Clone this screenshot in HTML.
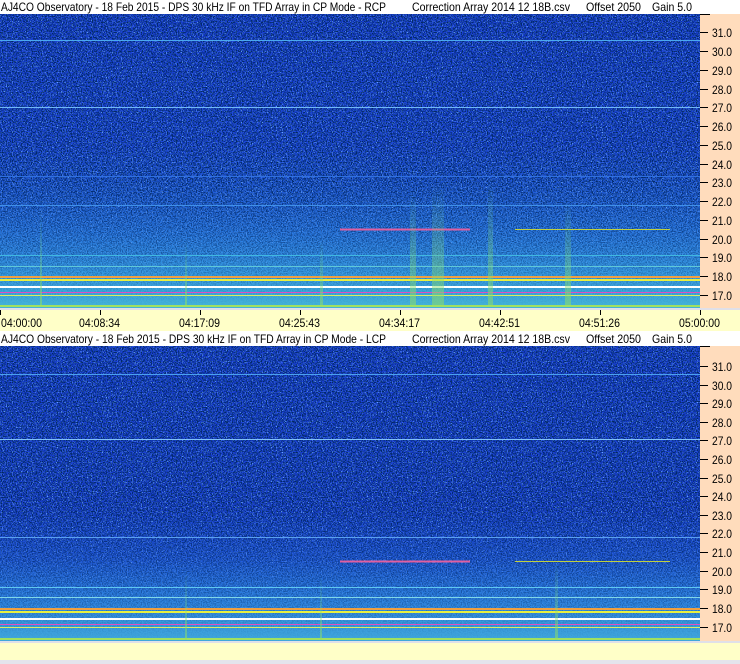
<!DOCTYPE html>
<html><head><style>
html,body{margin:0;padding:0;background:#fff;}
body{width:740px;height:664px;position:relative;overflow:hidden;font-family:"Liberation Sans",sans-serif;}
</style></head><body>
<svg width="740" height="664" style="position:absolute;left:0;top:0">
<defs>
<linearGradient id="g" x1="0" y1="0" x2="0" y2="1">
<stop offset="0" stop-color="#1a40d8"/>
<stop offset="0.45" stop-color="#1c46dc"/>
<stop offset="0.62" stop-color="#2260dc"/>
<stop offset="0.75" stop-color="#2a7ae2"/>
<stop offset="0.87" stop-color="#3598e2"/>
<stop offset="1" stop-color="#44b4d8"/>
</linearGradient>
<linearGradient id="g2" x1="0" y1="0" x2="0" y2="1">
<stop offset="0" stop-color="#1a40d8"/>
<stop offset="0.55" stop-color="#1a40d4"/>
<stop offset="0.72" stop-color="#2058d8"/>
<stop offset="0.85" stop-color="#2c80e0"/>
<stop offset="1" stop-color="#40a8dc"/>
</linearGradient>
<linearGradient id="fade" x1="0" y1="0" x2="0" y2="1">
<stop offset="0" stop-color="#fff"/>
<stop offset="0.55" stop-color="#fff"/>
<stop offset="0.8" stop-color="#888"/>
<stop offset="1" stop-color="#000"/>
</linearGradient>
<mask id="m1" maskContentUnits="objectBoundingBox"><rect width="1" height="1" fill="url(#fade)"/></mask>
<linearGradient id="vs" x1="0" y1="0" x2="0" y2="1">
<stop offset="0" stop-color="#70d890" stop-opacity="0"/>
<stop offset="1" stop-color="#90e060" stop-opacity="0.55"/>
</linearGradient>
<filter id="n" x="0" y="0" width="100%" height="100%">
<feTurbulence type="fractalNoise" baseFrequency="0.8" numOctaves="2" seed="3"/>
<feColorMatrix type="matrix" values="0 0 0 0 0  0 0 0 0 0.02  0 0 0 0 0.12  0 0 0 -5 2.9"/>
</filter>
<filter id="n2" x="0" y="0" width="100%" height="100%">
<feTurbulence type="fractalNoise" baseFrequency="0.8" numOctaves="2" seed="9"/>
<feColorMatrix type="matrix" values="0 0 0 0 0.15  0 0 0 0 0.4  0 0 0 0 1  0 0 0 5 -2.9"/>
</filter>
</defs>
<rect x="0" y="0" width="740" height="664" fill="#fff"/>
<rect x="700" y="14" width="40" height="296" fill="#ffdcbc"/>
<rect x="700" y="346" width="40" height="295" fill="#ffdcbc"/>
<rect x="0" y="14" width="700" height="294" fill="url(#g)"/>
<g mask="url(#m1)"><rect x="0" y="14" width="700" height="294" filter="url(#n)"/><rect x="0" y="14" width="700" height="294" filter="url(#n2)"/></g>
<rect x="0" y="346" width="700" height="295" fill="url(#g2)"/>
<g mask="url(#m1)"><rect x="0" y="346" width="700" height="295" filter="url(#n)"/><rect x="0" y="346" width="700" height="295" filter="url(#n2)"/></g>
<g stroke-width="1">
<line x1="0" y1="40.5" x2="700" y2="40.5" stroke="#4aa8f0"/>
<line x1="0" y1="107.5" x2="700" y2="107.5" stroke="#70b8f8"/>
<line x1="0" y1="176.5" x2="700" y2="176.5" stroke="#3070e0"/>
<line x1="0" y1="205.5" x2="700" y2="205.5" stroke="#4090e8"/>
<line x1="340" y1="229.5" x2="470" y2="229.5" stroke="#e060a0" stroke-width="2"/>
<line x1="515" y1="229.5" x2="670" y2="229.5" stroke="#c0d040"/>
<line x1="0" y1="255.5" x2="700" y2="255.5" stroke="#40b8e0"/>
<line x1="0" y1="266.5" x2="700" y2="266.5" stroke="#60c8d8"/>
<line x1="0" y1="277" x2="700" y2="277" stroke="#f0a040" stroke-width="2"/>
<line x1="0" y1="280" x2="700" y2="280" stroke="#e8f040" stroke-width="2"/>
<line x1="0" y1="287" x2="700" y2="287" stroke="#ffffff" stroke-width="2"/>
<line x1="0" y1="292.5" x2="700" y2="292.5" stroke="#e050c0"/>
<line x1="0" y1="295.5" x2="700" y2="295.5" stroke="#d8f060"/>
<line x1="0" y1="306" x2="700" y2="306" stroke="#a0e060" stroke-width="2"/>
</g>
<g>
<rect x="410" y="190" width="6" height="115" fill="url(#vs)"/>
<rect x="432" y="185" width="12" height="120" fill="url(#vs)"/>
<rect x="488" y="180" width="5" height="125" fill="url(#vs)"/>
<rect x="565" y="200" width="6" height="105" fill="url(#vs)"/>
<rect x="320" y="240" width="3" height="65" fill="url(#vs)"/>
<rect x="185" y="240" width="2" height="65" fill="url(#vs)"/>
<rect x="40" y="210" width="2" height="95" fill="url(#vs)"/>
</g>
<g stroke-width="1">
<line x1="0" y1="374.5" x2="700" y2="374.5" stroke="#4aa0f0"/>
<line x1="0" y1="439.5" x2="700" y2="439.5" stroke="#80c0f8"/>
<line x1="0" y1="537.5" x2="700" y2="537.5" stroke="#5aa0f0"/>
<line x1="340" y1="561.5" x2="470" y2="561.5" stroke="#e060a0" stroke-width="2"/>
<line x1="515" y1="561.5" x2="670" y2="561.5" stroke="#c0d040"/>
<line x1="0" y1="587.5" x2="700" y2="587.5" stroke="#60c8f0"/>
<line x1="0" y1="597.5" x2="700" y2="597.5" stroke="#80d8e8"/>
<line x1="0" y1="609" x2="700" y2="609" stroke="#f0a040" stroke-width="2"/>
<line x1="0" y1="612" x2="700" y2="612" stroke="#e8f040" stroke-width="2"/>
<line x1="0" y1="619" x2="700" y2="619" stroke="#ffffff" stroke-width="2"/>
<line x1="0" y1="624.5" x2="700" y2="624.5" stroke="#e050c0"/>
<line x1="0" y1="627.5" x2="700" y2="627.5" stroke="#d8f060"/>
<line x1="0" y1="639" x2="700" y2="639" stroke="#a0e060" stroke-width="2"/>
</g>
<g>
<rect x="185" y="570" width="2" height="70" fill="url(#vs)"/>
<rect x="320" y="575" width="2" height="65" fill="url(#vs)"/>
<rect x="555" y="560" width="3" height="80" fill="url(#vs)"/>
</g>
<rect x="0" y="308" width="740" height="2" fill="#e0e0e8"/>
<rect x="0" y="310" width="740" height="21" fill="#ffffc8"/>
<rect x="0" y="641" width="740" height="2" fill="#e0e0e8"/>
<rect x="0" y="643" width="740" height="17" fill="#ffffc8"/>
<rect x="0" y="660" width="740" height="4" fill="#e4e4ec"/>
<g stroke="#000">
<line x1="0.5" y1="310" x2="0.5" y2="315"/><line x1="100.5" y1="310" x2="100.5" y2="315"/>
<line x1="200.5" y1="310" x2="200.5" y2="315"/><line x1="300.5" y1="310" x2="300.5" y2="315"/>
<line x1="400.5" y1="310" x2="400.5" y2="315"/><line x1="500.5" y1="310" x2="500.5" y2="315"/>
<line x1="600.5" y1="310" x2="600.5" y2="315"/><line x1="700.5" y1="310" x2="700.5" y2="315"/>
</g>
<g stroke="#000">
<line x1="700" y1="14.5" x2="710" y2="14.5"/>
<line x1="700" y1="32.5" x2="708" y2="32.5"/><line x1="700" y1="51.5" x2="708" y2="51.5"/><line x1="700" y1="70.5" x2="708" y2="70.5"/><line x1="700" y1="89.5" x2="708" y2="89.5"/><line x1="700" y1="107.5" x2="708" y2="107.5"/><line x1="700" y1="126.5" x2="708" y2="126.5"/><line x1="700" y1="145.5" x2="708" y2="145.5"/><line x1="700" y1="164.5" x2="708" y2="164.5"/><line x1="700" y1="182.5" x2="708" y2="182.5"/><line x1="700" y1="201.5" x2="708" y2="201.5"/><line x1="700" y1="220.5" x2="708" y2="220.5"/><line x1="700" y1="239.5" x2="708" y2="239.5"/><line x1="700" y1="257.5" x2="708" y2="257.5"/><line x1="700" y1="276.5" x2="708" y2="276.5"/><line x1="700" y1="295.5" x2="708" y2="295.5"/>
<line x1="700" y1="346.5" x2="710" y2="346.5"/>
<line x1="700" y1="366.5" x2="708" y2="366.5"/><line x1="700" y1="385.5" x2="708" y2="385.5"/><line x1="700" y1="403.5" x2="708" y2="403.5"/><line x1="700" y1="422.5" x2="708" y2="422.5"/><line x1="700" y1="440.5" x2="708" y2="440.5"/><line x1="700" y1="459.5" x2="708" y2="459.5"/><line x1="700" y1="478.5" x2="708" y2="478.5"/><line x1="700" y1="496.5" x2="708" y2="496.5"/><line x1="700" y1="515.5" x2="708" y2="515.5"/><line x1="700" y1="533.5" x2="708" y2="533.5"/><line x1="700" y1="552.5" x2="708" y2="552.5"/><line x1="700" y1="571.5" x2="708" y2="571.5"/><line x1="700" y1="589.5" x2="708" y2="589.5"/><line x1="700" y1="608.5" x2="708" y2="608.5"/><line x1="700" y1="627.5" x2="708" y2="627.5"/>
</g>
<g font-family="Liberation Sans, sans-serif" font-size="12" fill="#000">
<text x="712" y="37" textLength="20" lengthAdjust="spacingAndGlyphs">31.0</text><text x="712" y="56" textLength="20" lengthAdjust="spacingAndGlyphs">30.0</text><text x="712" y="75" textLength="20" lengthAdjust="spacingAndGlyphs">29.0</text><text x="712" y="94" textLength="20" lengthAdjust="spacingAndGlyphs">28.0</text><text x="712" y="112" textLength="20" lengthAdjust="spacingAndGlyphs">27.0</text><text x="712" y="131" textLength="20" lengthAdjust="spacingAndGlyphs">26.0</text><text x="712" y="150" textLength="20" lengthAdjust="spacingAndGlyphs">25.0</text><text x="712" y="169" textLength="20" lengthAdjust="spacingAndGlyphs">24.0</text><text x="712" y="187" textLength="20" lengthAdjust="spacingAndGlyphs">23.0</text><text x="712" y="206" textLength="20" lengthAdjust="spacingAndGlyphs">22.0</text><text x="712" y="225" textLength="20" lengthAdjust="spacingAndGlyphs">21.0</text><text x="712" y="244" textLength="20" lengthAdjust="spacingAndGlyphs">20.0</text><text x="712" y="262" textLength="20" lengthAdjust="spacingAndGlyphs">19.0</text><text x="712" y="281" textLength="20" lengthAdjust="spacingAndGlyphs">18.0</text><text x="712" y="300" textLength="20" lengthAdjust="spacingAndGlyphs">17.0</text>
<text x="712" y="371" textLength="20" lengthAdjust="spacingAndGlyphs">31.0</text><text x="712" y="390" textLength="20" lengthAdjust="spacingAndGlyphs">30.0</text><text x="712" y="408" textLength="20" lengthAdjust="spacingAndGlyphs">29.0</text><text x="712" y="427" textLength="20" lengthAdjust="spacingAndGlyphs">28.0</text><text x="712" y="445" textLength="20" lengthAdjust="spacingAndGlyphs">27.0</text><text x="712" y="464" textLength="20" lengthAdjust="spacingAndGlyphs">26.0</text><text x="712" y="483" textLength="20" lengthAdjust="spacingAndGlyphs">25.0</text><text x="712" y="501" textLength="20" lengthAdjust="spacingAndGlyphs">24.0</text><text x="712" y="520" textLength="20" lengthAdjust="spacingAndGlyphs">23.0</text><text x="712" y="538" textLength="20" lengthAdjust="spacingAndGlyphs">22.0</text><text x="712" y="557" textLength="20" lengthAdjust="spacingAndGlyphs">21.0</text><text x="712" y="576" textLength="20" lengthAdjust="spacingAndGlyphs">20.0</text><text x="712" y="594" textLength="20" lengthAdjust="spacingAndGlyphs">19.0</text><text x="712" y="613" textLength="20" lengthAdjust="spacingAndGlyphs">18.0</text><text x="712" y="632" textLength="20" lengthAdjust="spacingAndGlyphs">17.0</text>
<text x="1" y="327" textLength="41" lengthAdjust="spacingAndGlyphs">04:00:00</text>
<text x="79" y="327" textLength="41" lengthAdjust="spacingAndGlyphs">04:08:34</text>
<text x="179" y="327" textLength="41" lengthAdjust="spacingAndGlyphs">04:17:09</text>
<text x="279" y="327" textLength="41" lengthAdjust="spacingAndGlyphs">04:25:43</text>
<text x="379" y="327" textLength="41" lengthAdjust="spacingAndGlyphs">04:34:17</text>
<text x="479" y="327" textLength="41" lengthAdjust="spacingAndGlyphs">04:42:51</text>
<text x="579" y="327" textLength="41" lengthAdjust="spacingAndGlyphs">04:51:26</text>
<text x="679" y="327" textLength="41" lengthAdjust="spacingAndGlyphs">05:00:00</text>
<text x="1" y="11" textLength="385" lengthAdjust="spacingAndGlyphs">AJ4CO Observatory - 18 Feb 2015 - DPS 30 kHz IF on TFD Array in CP Mode - RCP</text>
<text x="412" y="11" textLength="158" lengthAdjust="spacingAndGlyphs">Correction Array 2014 12 18B.csv</text>
<text x="586" y="11" textLength="55" lengthAdjust="spacingAndGlyphs">Offset 2050</text>
<text x="652" y="11" textLength="40" lengthAdjust="spacingAndGlyphs">Gain 5.0</text>
<text x="1" y="343" textLength="385" lengthAdjust="spacingAndGlyphs">AJ4CO Observatory - 18 Feb 2015 - DPS 30 kHz IF on TFD Array in CP Mode - LCP</text>
<text x="412" y="343" textLength="158" lengthAdjust="spacingAndGlyphs">Correction Array 2014 12 18B.csv</text>
<text x="586" y="343" textLength="55" lengthAdjust="spacingAndGlyphs">Offset 2050</text>
<text x="652" y="343" textLength="40" lengthAdjust="spacingAndGlyphs">Gain 5.0</text>
</g>
</svg>
</body></html>
